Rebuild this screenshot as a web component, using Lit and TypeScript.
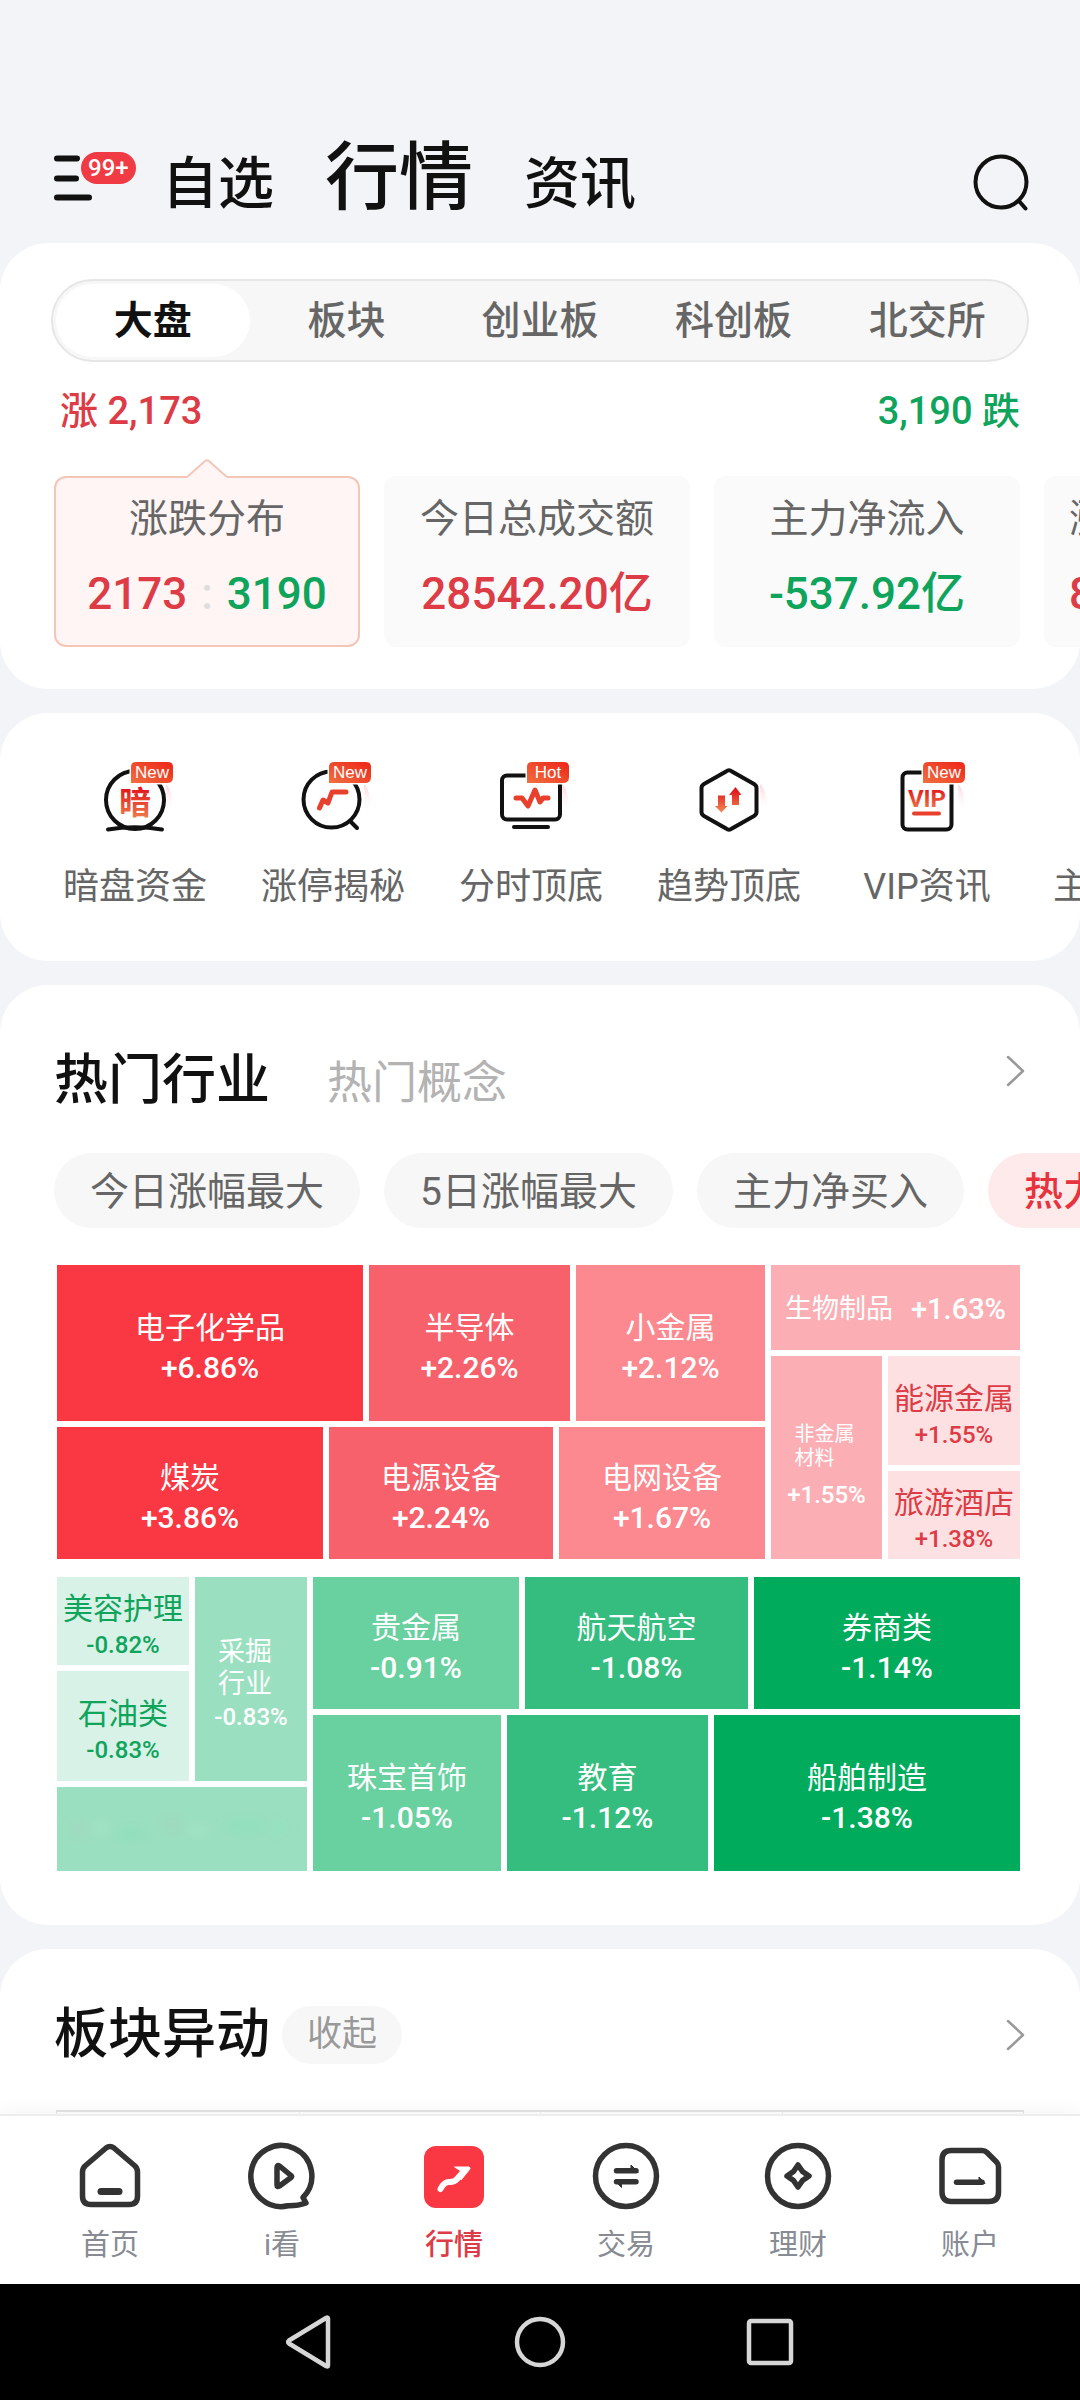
import { LitElement, html, svg, css, nothing, TemplateResult } from "lit";
import { customElement, property, state } from "lit/decorators.js";
import { classMap } from "lit/directives/class-map.js";
import { styleMap } from "lit/directives/style-map.js";

type Kind = "normal" | "small" | "inline" | "tall" | "tiny" | "blank";

interface Tile {
  name: string;
  change: string;
  tone: string;
  kind: Kind;
  weight: number;
}

interface Group {
  dir: "row" | "col";
  weight: number;
  items: (Group | Tile)[];
}

const tile = (name: string, change: string, tone: string, weight: number, kind: Kind = "normal"): Tile =>
  ({ name, change, tone, weight, kind });
const row = (weight: number, ...items: (Group | Tile)[]): Group => ({ dir: "row", weight, items });
const col = (weight: number, ...items: (Group | Tile)[]): Group => ({ dir: "col", weight, items });

const RISING = row(1,
  col(708,
    row(156,
      tile("电子化学品", "+6.86%", "up4", 306),
      tile("半导体", "+2.26%", "up3", 201),
      tile("小金属", "+2.12%", "up2", 189)),
    row(132,
      tile("煤炭", "+3.86%", "up4", 266),
      tile("电源设备", "+2.24%", "up3", 224),
      tile("电网设备", "+1.67%", "up2", 206))),
  col(249,
    tile("生物制品", "+1.63%", "up1", 84, "inline"),
    row(204,
      tile("非金属材料", "+1.55%", "up1", 111, "tiny"),
      col(132,
        tile("能源金属", "+1.55%", "up0", 111, "small"),
        tile("旅游酒店", "+1.38%", "up0", 87, "small")))));

const FALLING = row(1,
  col(250,
    row(204,
      col(132,
        tile("美容护理", "-0.82%", "down0", 87, "small"),
        tile("石油类", "-0.83%", "down0", 111, "small")),
      tile("采掘行业", "-0.83%", "down1", 112, "tall")),
    tile("", "", "down1", 84, "blank")),
  col(707,
    row(132,
      tile("贵金属", "-0.91%", "down2", 206),
      tile("航天航空", "-1.08%", "down3", 223),
      tile("券商类", "-1.14%", "down4", 266)),
    row(156,
      tile("珠宝首饰", "-1.05%", "down2", 188),
      tile("教育", "-1.12%", "down3", 201),
      tile("船舶制造", "-1.38%", "down4", 306))));

const base = css`
  :host { display: block; }
  *, *::before, *::after { box-sizing: border-box; }
  button {
    appearance: none; border: 0; margin: 0; padding: 0; background: none;
    font: inherit; color: inherit; cursor: pointer; white-space: nowrap;
  }
  svg { display: block; }
`;

@customElement("heat-map")
export class HeatMap extends LitElement {
  @property({ attribute: false }) map!: Group;

  static styles = [base, css`
    .map { display: flex; height: 294px; }
    .group { display: flex; gap: 6px; min-width: 0; min-height: 0; flex-basis: 0; }
    .col { flex-direction: column; }
    .tile {
      display: flex; flex-direction: column; align-items: center; justify-content: center;
      flex-basis: 0; min-width: 0; min-height: 0; padding-top: 10px; overflow: hidden;
      font-size: 30px; line-height: 40px; color: #fff;
    }
    .change { font-weight: 500; }
    .small { line-height: 36px; padding-top: 12px; }
    .small .change { font-size: 24px; }
    .inline { flex-direction: row; gap: 18px; font-size: 27px; padding-top: 2px; }
    .inline .change { font-size: 29px; }
    .tall { padding-top: 12px; }
    .tiny { padding-top: 26px; }
    .tall .name { font-size: 27px; line-height: 32px; width: 66px; white-space: normal; text-align: left; }
    .tiny .name { font-size: 20px; line-height: 24px; width: 64px; white-space: normal; text-align: left; }
    .tall .change { font-size: 24px; line-height: 34px; }
    .tiny .change { font-size: 24px; line-height: 50px; }
    .blank { padding: 0; }
    .up4 { background: #f93843; }
    .up3 { background: #f7616b; }
    .up2 { background: #fb898f; }
    .up1 { background: #fbafb4; }
    .up0 { background: #fde1e2; color: #dd3b45; }
    .down4 { background: #00ac5c; }
    .down3 { background: #35bd7f; }
    .down2 { background: #69d0a0; }
    .down1 { background: #9adfbf; }
    .down0 { background: #d8f2e7; color: #0fa45c; }
  `];

  private node(n: Group | Tile): TemplateResult {
    const grow = styleMap({ flexGrow: String(n.weight) });
    if ("items" in n) {
      return html`<div class=${classMap({ group: true, col: n.dir === "col" })} style=${grow}>
        ${n.items.map((i) => this.node(i))}</div>`;
    }
    if (n.kind === "blank") {
      return html`<div class="tile blank ${n.tone}" style=${grow}>
        <svg width="240" height="50" viewBox="0 0 240 50" aria-hidden="true">
          <defs><filter id="soft"><feGaussianBlur stdDeviation="4" /></filter></defs>
          <g filter="url(#soft)">
            <ellipse cx="18" cy="26" rx="9" ry="9" fill="#a0dac0" />
            <ellipse cx="38" cy="24" rx="10" ry="7" fill="#a0e1c4" />
            <ellipse cx="70" cy="30" rx="14" ry="8" fill="#93dfbd" />
            <ellipse cx="110" cy="20" rx="12" ry="10" fill="#9edabf" />
            <ellipse cx="136" cy="26" rx="12" ry="7" fill="#a0e1c4" />
            <ellipse cx="184" cy="22" rx="20" ry="9" fill="#93e0be" />
            <ellipse cx="216" cy="24" rx="9" ry="9" fill="#95e1c0" />
          </g>
        </svg></div>`;
    }
    return html`<button class="tile ${n.kind} ${n.tone}" style=${grow}>
      <span class="name">${n.name}</span><span class="change">${n.change}</span>
    </button>`;
  }

  render() {
    return html`<div class="map">${this.node(this.map)}</div>`;
  }
}

const SHORTCUTS = [
  {
    label: "暗盘资金", tag: "New",
    art: svg`<circle cx="45" cy="40" r="29" /><path d="M18 69.500Q45 65 72 69.500" />
      <text class="glyph" x="45" y="54" text-anchor="middle" font-size="32">暗</text>`,
  },
  {
    label: "涨停揭秘", tag: "New",
    art: svg`<circle cx="43.500" cy="39.500" r="28" /><path d="M62 61L69 68" />
      <path class="hot" d="M31.500 48L35 40L40 43L44 32H58" />`,
  },
  {
    label: "分时顶底", tag: "Hot",
    art: svg`<rect x="16" y="15.500" width="58" height="44" rx="5" /><path d="M28 67H62" />
      <path class="hot" d="M30 38H36L42 46L49 30L54 42L57 38H62" />`,
  },
  {
    label: "趋势顶底", tag: "",
    art: svg`<path d="M42 11.500Q45 9 48 11.500L70 24Q72.500 25.500 72.500 28V52Q72.500 54.500 70 56L48 68.500Q45 71 42 68.500L20 56Q17.500 54.500 17.500 52V28Q17.500 25.500 20 24Z" />
      <path class="solid" d="M34 35.500H41V46H43.500L37.500 52.500L31 46H34ZM48 45H55V35H57.500L51.500 27L45 35H48Z" />`,
  },
  {
    label: "VIP资讯", tag: "New",
    art: svg`<rect x="20.500" y="12.500" width="49" height="57" rx="5" />
      <text class="glyph" x="45" y="47" text-anchor="middle" font-size="24">VIP</text>
      <path class="hot thin" d="M32 53.500H57" />`,
  },
  { label: "主力资金", tag: "", art: svg`<circle cx="45" cy="40" r="0" />` },
];

const NAV = [
  {
    label: "首页",
    art: svg`<path d="M32 8Q36 5 40 8L61 26Q63.500 28.500 63.500 32V56Q63.500 64.500 55 64.500H17Q8.500 64.500 8.500 56V32Q8.500 28.500 11 26Z" />
      <path class="bold" d="M27 51.500H45" />`,
  },
  {
    label: "i看",
    art: svg`<path d="M57 57.500A30.500 30.500 0 1 0 42 65.800Q52 66 60 63Z" />
      <path d="M31 27.500V45Q31 47.500 33.500 46L45 37.500Q46 36.500 45 35.500L33.500 26Q31 24.500 31 27.500Z" />`,
  },
  {
    label: "行情", active: true,
    art: svg`<rect class="plate" x="6" y="6" width="60" height="62" rx="12" />
      <path class="white" d="M22.500 49Q26 42 31 42Q36 42.500 39 39L46 31" />
      <path class="head" d="M37 27H51Q53 27.500 51.500 29.500L43 40L44 32Z" />`,
  },
  {
    label: "交易",
    art: svg`<circle cx="36" cy="36" r="30.500" /><path d="M26.500 30.700H46M26.500 41.700H46" />
      <path class="fill" d="M41 31V25L48 32ZM31.500 41V47.500L25 41Z" />`,
  },
  {
    label: "理财",
    art: svg`<circle cx="36" cy="36" r="30.500" />
      <path d="M36 25L40.500 31.500L47 36L40.500 40.500L36 47L31.500 40.500L25 36L31.500 31.500Z" />`,
  },
  {
    label: "账户",
    art: svg`<path d="M17 10.500H48Q51 10.500 53 12.500L62.500 22Q64.500 24 64.500 27V52Q64.500 61.500 55 61.500H17Q8 61.500 8 52V20Q8 10.500 17 10.500Z" />
      <path d="M22.500 42.300H48" /><path class="fill" d="M45 42V37L51 43.500H45Z" />`,
  },
];

@customElement("app-root")
export class AppRoot extends LitElement {
  @state() private market = 0;

  private markets = ["大盘", "板块", "创业板", "科创板", "北交所"];
  private filters = ["今日涨幅最大", "5日涨幅最大", "主力净买入", "热力图"];

  static styles = [base, css`
    :host {
      font-family: Roboto, "Noto Sans CJK SC", sans-serif;
      color: #111; background: #f3f4f8;
    }
    .page { min-height: 100vh; display: flex; flex-direction: column; }
    .red { color: #dd3b45; }
    .green { color: #0fa45c; }

    .header {
      display: flex; align-items: center; padding: 138px 51px 25px 54px;
    }
    .menu {
      position: relative; width: 82px; height: 80px; margin-right: 26px;
      display: flex; align-items: center;
    }
    .count {
      position: absolute; left: 27px; top: 14px; height: 32px; padding: 0 7px; box-shadow: 0 0 0 3px #f3f4f8;
      border-radius: 16px; background: #f03b45; color: #fff; font-size: 24px; line-height: 32px; font-weight: 500;
    }
    .search { padding-top: 8px; }
    .tabs {
      display: flex; align-items: baseline; gap: 51px; flex: 1; height: 80px;
      font-size: 56px; line-height: 80px; font-weight: 500;
    }
    .tabs .current { font-size: 74px; }

    .main { flex: 1; display: flex; flex-direction: column; gap: 24px; }
    .card { background: #fff; border-radius: 48px; overflow: hidden; }
    .last { flex: 1; border-radius: 48px 48px 0 0; display: flex; flex-direction: column; justify-content: space-between; }

    .segments {
      display: grid; grid-template-columns: repeat(5, 1fr); margin: 36px 51px 0; padding: 3px;
      height: 83px; border: 2px solid #e6e6e6; border-radius: 42px; background: #f7f7f7;
      font-size: 39px; color: #666; font-weight: 500;
    }
    .segments button { border-radius: 37px; padding-bottom: 8px; }
    .segments .current { background: #fff; color: #111; font-weight: 700; }
    .counts {
      display: flex; justify-content: space-between; margin: 24px 60px 0;
      font-size: 38px; line-height: 50px; font-weight: 500;
    }
    .stats { display: flex; gap: 24px; padding: 40px 0 42px 54px; overflow: hidden; }
    .stat {
      position: relative; flex: none; width: 306px; padding: 18px 0 26px; border-radius: 12px;
      background: #fafafa; display: flex; flex-direction: column; align-items: center; gap: 23px;
    }
    .stat .title { font-size: 39px; line-height: 50px; color: #666; }
    .stat .value { font-size: 44px; line-height: 54px; font-weight: 500; }
    .stat .colon { color: #ddd; padding: 0 14px; }
    .stat.picked { background: #fff5f4; box-shadow: inset 0 0 0 2px #f3c6b8; }
    .stat.cut { align-items: flex-start; padding-left: 25px; }
    .pointer { position: absolute; left: 50%; top: -17px; margin-left: -20px; }

    .shortcuts { display: flex; padding: 47px 0 50px 36px; overflow: hidden; }
    .shortcut {
      flex: none; width: 198px; display: flex; flex-direction: column; align-items: center; gap: 31px;
      font-size: 36px; line-height: 48px; color: #666;
    }
    .shortcut svg { fill: none; stroke: #111; stroke-width: 4; stroke-linecap: round; overflow: visible; }
    .shortcut .glyph { fill: url(#heat); stroke: none; font-weight: 700; }
    .shortcut .hot { stroke: #e8402c; stroke-width: 5; stroke-linejoin: round; }
    .shortcut .thin { stroke-width: 4; }
    .shortcut .solid { fill: url(#heat); stroke: none; }
    .shortcut .glow { fill: url(#glow); stroke: none; }
    .shortcut .tag { fill: url(#tag); stroke: #fff; stroke-width: 3; paint-order: stroke; }
    .shortcut .tagtext { fill: #fff; stroke: none; font-family: "Liberation Sans", sans-serif; font-size: 17px; }

    .heading { display: flex; align-items: baseline; height: 72px; padding: 0 54px; line-height: 72px; }
    .heading h2 { margin: 0; font-size: 54px; font-weight: 500; }
    .heading .other { margin-left: 57px; font-size: 45px; color: #b3b3b3; }
    .heading .more { margin-left: auto; align-self: center; }
    .hot-head { margin-top: 60px; }
    .hot-head .more { padding-bottom: 20px; }
    .moves-head { margin-top: 50px; align-items: center; }
    .fold {
      margin-left: 12px; padding: 0 25px; height: 58px; border-radius: 29px; background: #f7f7f7;
      font-size: 35px; line-height: 56px; color: #999;
    }
    .filters { display: flex; gap: 24px; padding: 36px 0 37px 54px; overflow: hidden; }
    .chip {
      flex: none; height: 75px; padding: 0 36px 6px; border-radius: 38px; background: #f7f7f7;
      font-size: 39px; color: #666;
    }
    .chip.current { background: #feeaea; color: #e8323d; font-weight: 500; }
    .maps { display: grid; gap: 18px; padding: 0 60px 54px 57px; }
    .board { display: grid; grid-template-columns: repeat(4, 1fr); margin: 0 56px; height: 4px; border: 1px solid #e4e4e4; border-top-width: 2px; border-bottom: 0; }
    .board i + i { border-left: 1px solid #eee; }

    .nav {
      display: grid; grid-template-columns: repeat(6, 1fr); padding: 24px 24px 19px; background: #fff;
      border-top: 2px solid #ededed; box-shadow: 0 -2px 20px rgba(0, 0, 0, 0.05); z-index: 1;
    }
    .nav a {
      display: flex; flex-direction: column; align-items: center; gap: 13px; text-decoration: none;
      font-size: 29px; line-height: 40px; color: #878b93;
    }
    .nav a.current { color: #dd3b45; font-weight: 500; }
    .nav svg { fill: none; stroke: #333; stroke-width: 5.5; stroke-linejoin: round; stroke-linecap: round; }
    .nav .bold { stroke-width: 7; }
    .nav .fill { fill: #333; stroke-width: 1; }
    .nav .plate { fill: #f93843; stroke: none; }
    .nav .white { stroke: #fff; stroke-width: 6; }
    .nav .head { fill: #fff; stroke: #fff; stroke-width: 1; }

    .system { display: flex; justify-content: center; gap: 174px; height: 116px; background: #000; }
    .system svg { fill: none; stroke: #d6d6d6; stroke-width: 4.5; stroke-linejoin: round; }
  `];

  private chevron() {
    return html`<svg width="20" height="34" viewBox="0 0 20 34" fill="none" stroke="#999" stroke-width="2.5"
      stroke-linejoin="round" stroke-linecap="round"><path d="M2 3L17 17L2 31" /></svg>`;
  }

  render() {
    return html`
      <div class="page">
        <header class="header">
          <button class="menu" aria-label="菜单">
            <svg width="40" height="48" viewBox="0 0 40 48" fill="none" stroke="#111" stroke-width="6" stroke-linecap="round">
              <path d="M3 4.500H23M3 24.500H22M3 43.500H35" />
            </svg>
            <span class="count">99+</span>
          </button>
          <nav class="tabs">
            <button>自选</button><button class="current">行情</button><button>资讯</button>
          </nav>
          <button class="search" aria-label="搜索">
            <svg width="56" height="58" viewBox="0 0 56 58" fill="none" stroke="#111" stroke-width="4" stroke-linecap="round">
              <circle cx="28" cy="29" r="25.500" /><path d="M46 48L52.500 55.500" />
            </svg>
          </button>
        </header>

        <main class="main">
          <section class="card">
            <div class="segments">
              ${this.markets.map((m, i) => html`<button class=${classMap({ current: i === this.market })}
                @click=${() => (this.market = i)}>${m}</button>`)}
            </div>
            <div class="counts"><span class="red">涨 2,173</span><span class="green">3,190 跌</span></div>
            <div class="stats">
              <button class="stat picked">
                <svg class="pointer" width="40" height="19" viewBox="0 0 40 19">
                  <path d="M0 18L18 2Q20 0.500 22 2L40 18V19H0Z" fill="#fff5f4" />
                  <path d="M0 18L18 2Q20 0.500 22 2L40 18" fill="none" stroke="#f3c6b8" stroke-width="2" />
                </svg>
                <span class="title">涨跌分布</span>
                <span class="value"><span class="red">2173</span><span class="colon">:</span><span class="green">3190</span></span>
              </button>
              <button class="stat"><span class="title">今日总成交额</span><span class="value red">28542.20亿</span></button>
              <button class="stat"><span class="title">主力净流入</span><span class="value green">-537.92亿</span></button>
              <button class="stat cut"><span class="title">涨停表现</span><span class="value red">86</span></button>
            </div>
          </section>

          <section class="card">
            <div class="shortcuts">
              ${SHORTCUTS.map((s) => html`<button class="shortcut">
                <svg width="90" height="72" viewBox="0 0 90 72" aria-hidden="true">
                  <defs>
                    <linearGradient id="heat" x1="0" y1="0" x2="0" y2="1">
                      <stop offset="0.150" stop-color="#e01a1e" /><stop offset="1" stop-color="#f28a50" />
                    </linearGradient>
                    <linearGradient id="tag" x1="0" y1="1" x2="1" y2="0">
                      <stop offset="0" stop-color="#f07040" /><stop offset="1" stop-color="#ee2418" />
                    </linearGradient>
                    <linearGradient id="glow" x1="0" y1="0" x2="0" y2="1">
                      <stop offset="0" stop-color="#fdd3dc" /><stop offset="1" stop-color="#fff" stop-opacity="0" />
                    </linearGradient>
                  </defs>
                  ${s.art}
                  ${s.label === "主力资金" ? nothing : svg`<path class="glow" d="M76 24Q83 30 83 52H77Z" />`}
                  ${s.tag ? svg`<path class="tag" d="M46 2H78Q83 2 83 7V17Q83 23 77 23H41V7Q41 2 46 2Z" />
                    <text class="tagtext" x="62" y="18" text-anchor="middle">${s.tag}</text>` : nothing}
                </svg>
                <span>${s.label}</span>
              </button>`)}
            </div>
          </section>

          <section class="card">
            <div class="heading hot-head">
              <h2>热门行业</h2><button class="other">热门概念</button>
              <button class="more" aria-label="更多行业">${this.chevron()}</button>
            </div>
            <div class="filters">
              ${this.filters.map((f, i) => html`<button class=${classMap({ chip: true, current: i === 3 })}>${f}</button>`)}
            </div>
            <div class="maps">
              <heat-map .map=${RISING}></heat-map>
              <heat-map .map=${FALLING}></heat-map>
            </div>
          </section>

          <section class="card last">
            <div class="heading moves-head">
              <h2>板块异动</h2><button class="fold">收起</button>
              <button class="more" aria-label="更多异动">${this.chevron()}</button>
            </div>
            <div class="board"><i></i><i></i><i></i><i></i></div>
          </section>
        </main>

        <nav class="nav">
          ${NAV.map((n) => html`<a href="#" class=${classMap({ current: !!n.active })}>
            <svg width="72" height="72" viewBox="0 0 72 72" aria-hidden="true">${n.art}</svg>
            <span>${n.label}</span>
          </a>`)}
        </nav>
        <div class="system">
          <button aria-label="返回"><svg width="56" height="56" viewBox="0 0 56 56">
            <path d="M46 4.500V51.500Q46 53 44 52L7 29.500Q5.500 28 7 26.500L44 4Q46 3 46 4.500Z" /></svg></button>
          <button aria-label="主页"><svg width="56" height="56" viewBox="0 0 56 56"><circle cx="28" cy="28" r="23" /></svg></button>
          <button aria-label="最近任务"><svg width="56" height="56" viewBox="0 0 56 56"><rect x="7" y="7" width="42" height="42" rx="2" /></svg></button>
        </div>
      </div>
    `;
  }
}
